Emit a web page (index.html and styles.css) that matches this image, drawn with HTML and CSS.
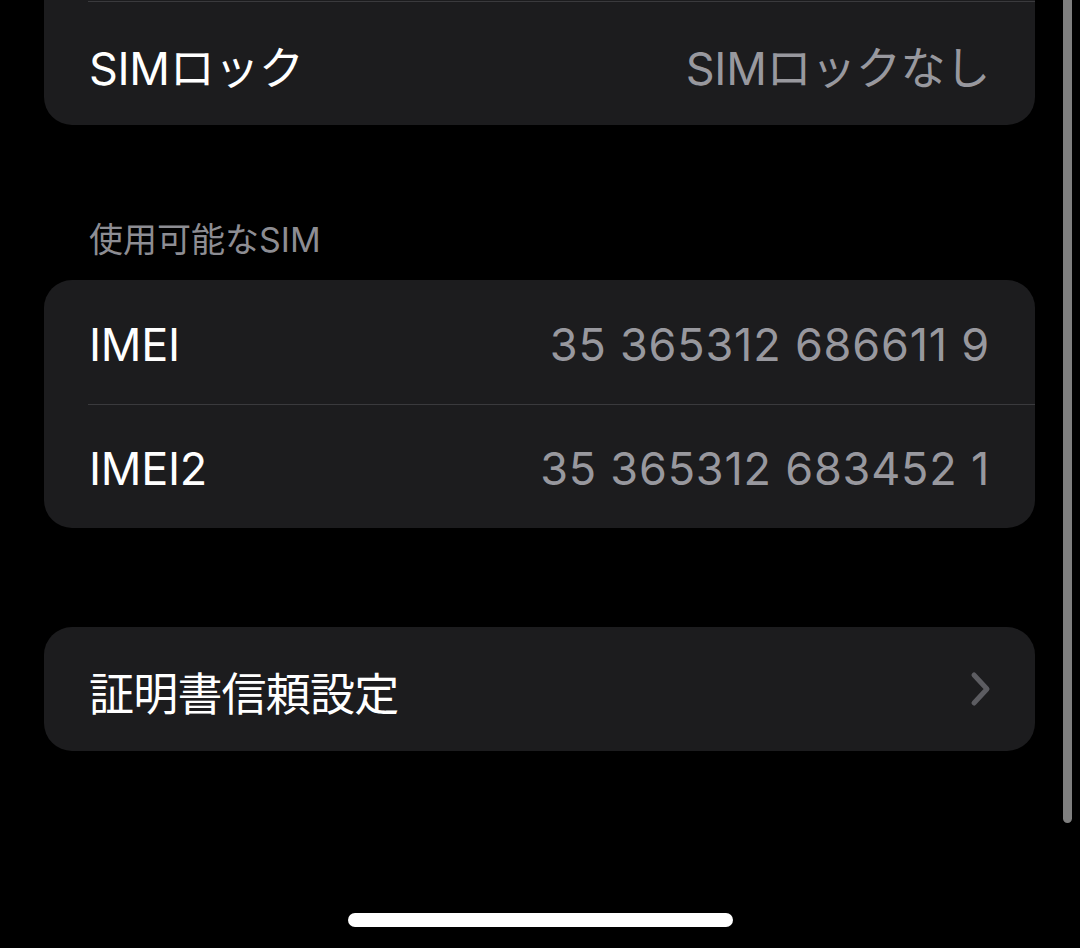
FILE: index.html
```html
<!DOCTYPE html>
<html lang="ja">

<head>
    <meta charset="UTF-8">
    <meta name="viewport" content="width=device-width, initial-scale=1.0">
    <title>情報</title>
    <link rel="stylesheet" href="styles.css">
</head>

<body>
    <div class="screen">
        <div class="settings">
            <div class="card cut-top">
                <div class="row line-top">
                    <span class="label">SIMロック</span>
                    <span class="value">SIMロックなし</span>
                </div>
            </div>

            <h3 class="section-title">使用可能なSIM</h3>
            <div class="card">
                <div class="row">
                    <span class="label">IMEI</span>
                    <span class="value num">35 365312 686611 9</span>
                </div>
                <div class="row">
                    <span class="label">IMEI2</span>
                    <span class="value num">35 365312 683452 1</span>
                </div>
            </div>

            <div class="card spaced">
                <div class="row">
                    <span class="label cjk">証明書信頼設定</span>
                    <svg class="chevron" width="22" height="36" viewBox="0 0 22 36">
                        <path d="M4 4 L17 18 L4 32" fill="none" stroke="#5c5c61" stroke-width="5"
                            stroke-linecap="round" stroke-linejoin="round" />
                    </svg>
                </div>
            </div>
        </div>

        <!-- overlays -->
        <div class="scrollbar"></div>
        <div class="home-indicator"></div>
    </div>
</body>

</html>
```

FILE: styles.css
```css
/* Global Styles */
body {
    margin: 0;
    padding: 0;
    background-color: #000;
    font-family: 'Inter', 'Noto Sans CJK JP', sans-serif;
    color: #fff;
}

.screen {
    position: relative;
    width: 1080px;
    height: 948px;
    overflow: hidden;
}

.settings {
    padding: 0 45px 0 44px;
}

/* Cards */
.card {
    background-color: #1c1c1e;
    border-radius: 28px;
    overflow: hidden;
}

.card.cut-top {
    border-top-left-radius: 0;
    border-top-right-radius: 0;
    padding-top: 1px;
}

.card.spaced {
    margin-top: 99px;
}

.row {
    position: relative;
    display: flex;
    align-items: center;
    justify-content: space-between;
    box-sizing: border-box;
    height: 124px;
    padding: 4px 45px 0;
    font-size: 45px;
}

.row + .row,
.row.line-top {
    border-top: 1px solid transparent;
}

.row + .row::before,
.row.line-top::before {
    content: '';
    position: absolute;
    top: -1px;
    left: 44px;
    right: 0;
    height: 1px;
    background-color: #3a3a3d;
}

.label {
    color: #fff;
    letter-spacing: -0.3px;
}

.label.cjk {
    letter-spacing: -0.8px;
}

.value {
    color: #98989e;
    letter-spacing: -0.3px;
}

.value.num {
    letter-spacing: 0.8px;
}

.chevron {
    display: block;
    margin-right: -2px;
    margin-top: -4px;
}

/* Section header */
.section-title {
    margin: 95px 0 20px;
    padding: 0 45px;
    font-size: 34px;
    font-weight: normal;
    line-height: 40px;
    color: #8d8d93;
}

/* Overlays */
.scrollbar {
    position: absolute;
    top: -10px;
    left: 1063px;
    width: 9px;
    height: 833px;
    border-radius: 5px;
    background-color: #7f7f7f;
}

.home-indicator {
    position: absolute;
    left: 348px;
    top: 913px;
    width: 385px;
    height: 14px;
    border-radius: 7px;
    background-color: #fff;
}
```
